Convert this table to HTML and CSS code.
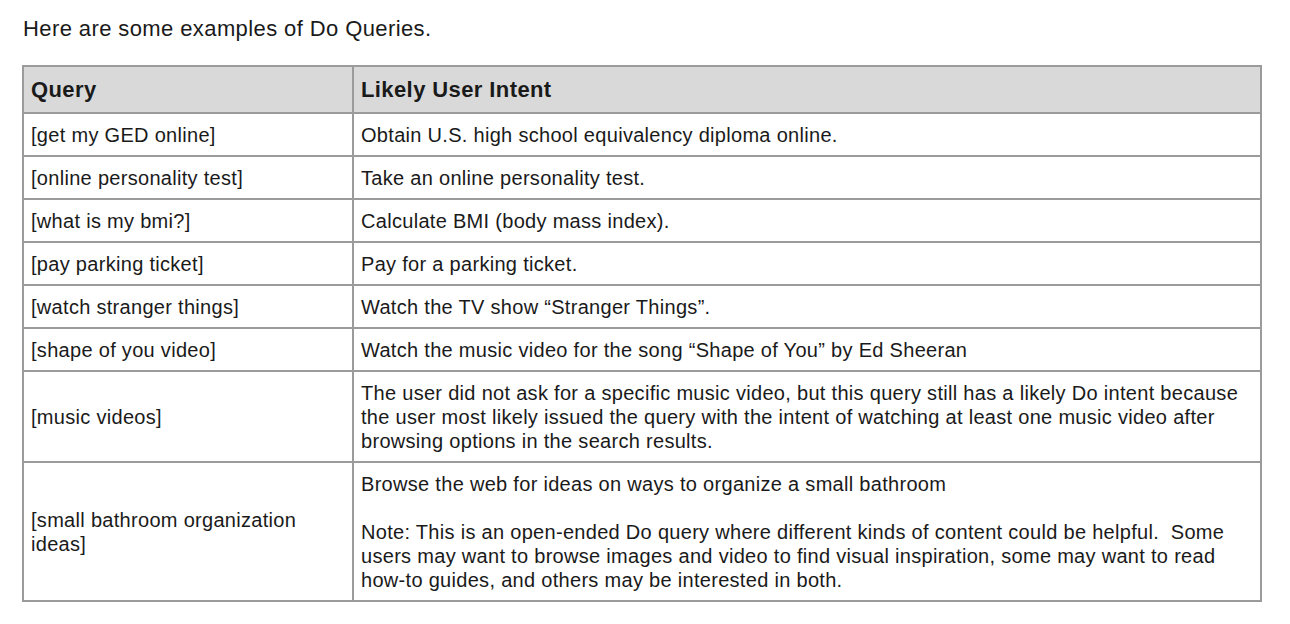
FILE: index.html
```html
<!DOCTYPE html>
<html>
<head>
<meta charset="utf-8">
<link rel="stylesheet" href="styles.css">
</head>
<body>
<p class="intro">Here are some examples of Do Queries.</p>
<table class="examples">
  <colgroup><col class="c1"><col class="c2"></colgroup>
  <thead>
    <tr><th>Query</th><th>Likely User Intent</th></tr>
  </thead>
  <tbody>
    <tr><td>[get my GED online]</td><td>Obtain U.S. high school equivalency diploma online.</td></tr>
    <tr><td>[online personality test]</td><td>Take an online personality test.</td></tr>
    <tr><td>[what is my bmi?]</td><td>Calculate BMI (body mass index).</td></tr>
    <tr><td>[pay parking ticket]</td><td>Pay for a parking ticket.</td></tr>
    <tr><td>[watch stranger things]</td><td>Watch the TV show “Stranger Things”.</td></tr>
    <tr><td>[shape of you video]</td><td>Watch the music video for the song “Shape of You” by Ed Sheeran</td></tr>
    <tr><td>[music videos]</td><td>The user did not ask for a specific music video, but this query still has a likely Do intent because the user most likely issued the query with the intent of watching at least one music video after browsing options in the search results.</td></tr>
    <tr><td>[small bathroom organization ideas]</td><td><p class="para">Browse the web for ideas on ways to organize a small bathroom</p><p class="para">Note: This is an open-ended Do query where different kinds of content could be helpful.&nbsp; Some users may want to browse images and video to find visual inspiration, some may want to read how-to guides, and others may be interested in both.</p></td></tr>
  </tbody>
</table>
</body>
</html>
```
FILE: styles.css
```css
html, body {
  margin: 0;
  padding: 0;
  background: #ffffff;
}
body {
  font-family: "Liberation Sans", Arial, sans-serif;
  color: #1a1a1a;
  padding: 16px 0 0 23px;
}
.intro {
  margin: 0 0 24px 0;
  font-size: 22px;
  line-height: 25px;
  letter-spacing: 0.4px;
}
.examples {
  border-collapse: collapse;
  table-layout: fixed;
  width: 1240px;
  margin-left: -1px;
  font-size: 20px;
  line-height: 24px;
  letter-spacing: 0.3px;
}
.c1 { width: 330px; }
.examples th,
.examples td {
  border: 2px solid #9b9b9b;
  padding: 9px 8px 8px 7px;
  text-align: left;
  vertical-align: middle;
}
.examples th {
  background: #d9d9d9;
  font-weight: bold;
  font-size: 22px;
  line-height: 27px;
  letter-spacing: 0.4px;
  padding-top: 9px;
  padding-bottom: 9px;
}
.para {
  margin: 0;
}
.para + .para {
  margin-top: 24px;
}
```
